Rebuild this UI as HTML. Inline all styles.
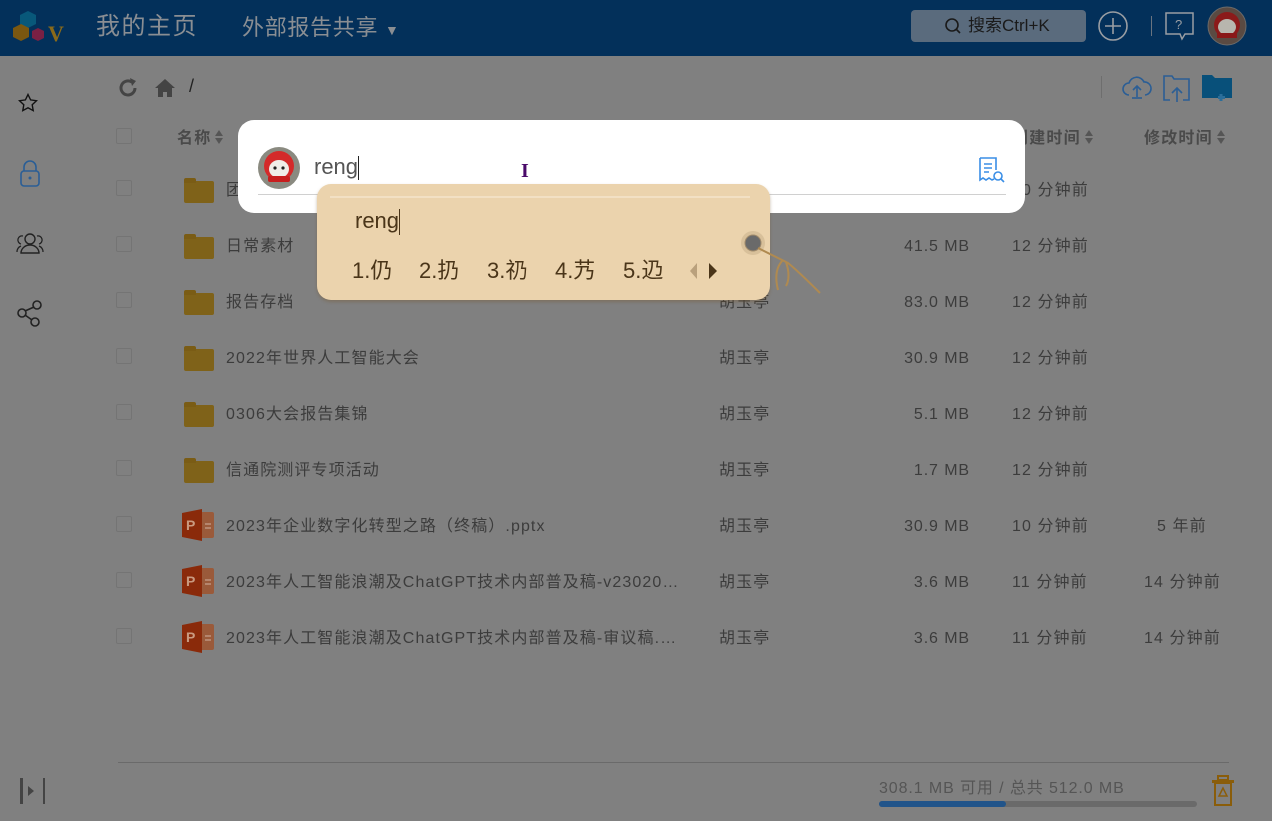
<!DOCTYPE html>
<html><head><meta charset="utf-8"><style>
*{margin:0;padding:0;box-sizing:border-box}
body{width:1272px;height:821px;overflow:hidden;background:#808080;font-family:"Liberation Sans","Noto Sans CJK SC",sans-serif;position:relative;color:#3c3c3c}
.hdr{position:absolute;left:0;top:0;width:1272px;height:56px;background:#03305a}
.t{position:absolute;white-space:nowrap}
.cb{position:absolute;left:116px;width:16px;height:16px;border:1px solid #747474;border-radius:2px}
.fold{position:absolute;left:184px;width:30px;height:22px;background:#7f6219;border-radius:2px}
.fold:before{content:"";position:absolute;left:0;top:-3px;width:12px;height:5px;background:#7a5c15;border-radius:2px 2px 0 0}
.row{font-size:16px;color:#3c3c3c;line-height:20px;letter-spacing:1.1px}
.sz{position:absolute;right:302px;font-size:16px;color:#3c3c3c;line-height:20px;white-space:nowrap;letter-spacing:0.9px}
.ppt{position:absolute;left:182px;width:34px;height:32px}
.so{display:inline-block;vertical-align:middle;margin-left:4px;width:9px;height:14px;position:relative;top:-2px}
.so:before{content:"";position:absolute;left:0;top:0;border-left:4.5px solid transparent;border-right:4.5px solid transparent;border-bottom:6px solid #555}
.so:after{content:"";position:absolute;left:0;bottom:0;border-left:4.5px solid transparent;border-right:4.5px solid transparent;border-top:6px solid #555}
.hd{font-size:16px;font-weight:bold;color:#4a4a4a;line-height:20px;letter-spacing:1.2px}
.cand{position:absolute;top:256px;font-size:22px;color:#4a3519;line-height:30px}
.long{overflow:hidden;text-overflow:ellipsis;width:458px}
</style></head><body>
<div class="hdr"></div>
<svg class="t" style="left:12px;top:10px" width="56" height="34"><polygon points="16,1 24,5 24,14 16,18 8,14 8,5" fill="#08587a"/><polygon points="9,14 17,18 17,27 9,31 1,27 1,18" fill="#7a5710"/><polygon points="26,18 32,21 32,28 26,31 20,28 20,21" fill="#7a2044"/><text x="36" y="31" font-family="Liberation Serif" font-weight="bold" font-size="22" fill="#8a6a1a">V</text></svg>
<div class="t" style="left:96px;top:12px;font-size:24px;color:#8a8e93;line-height:30px;letter-spacing:1.5px">我的主页</div>
<div class="t" style="left:242px;top:13px;font-size:22px;color:#8a8e93;line-height:30px;letter-spacing:0.7px">外部报告共享 <span style="font-size:14px">▼</span></div>
<div class="t" style="left:911px;top:10px;width:175px;height:32px;background:#5a6b7d;border-radius:4px;font-size:17px;color:#1a1a1a;padding:0 0 0 57px;line-height:32px">搜索Ctrl+K</div>
<svg class="t" style="left:944px;top:17px" width="18" height="18"><circle cx="8" cy="8" r="6" fill="none" stroke="#1a1a1a" stroke-width="1.6"/><line x1="12" y1="12" x2="16" y2="16" stroke="#1a1a1a" stroke-width="1.6"/></svg>
<svg class="t" style="left:1097px;top:10px" width="32" height="32"><circle cx="16" cy="16" r="14" fill="none" stroke="#9a9ea3" stroke-width="1.6"/><path d="M16 8v16M8 16h16" stroke="#9a9ea3" stroke-width="1.6"/></svg>
<div class="t" style="left:1151px;top:16px;width:1px;height:20px;background:#6a7480"></div>
<svg class="t" style="left:1164px;top:10px" width="32" height="32"><path d="M2 3h27v21h-8l-3 5-2-5H2z" fill="none" stroke="#9a9ea3" stroke-width="1.5"/><text x="11" y="19" font-size="13" fill="#9a9ea3">?</text></svg>
<svg class="t" style="left:1207px;top:6px" width="40" height="40"><circle cx="20" cy="20" r="19" fill="#5a4a42" stroke="#6a6a6a"/><circle cx="20" cy="19" r="13" fill="#8b1a1a"/><ellipse cx="20" cy="21" rx="9" ry="8" fill="#b8b6ae"/><rect x="10" y="27" width="20" height="5" fill="#8a1818"/></svg>
<!-- sidebar -->
<svg class="t" style="left:18px;top:93px" width="20" height="20"><path d="M10 1.5l2.6 5.4 5.9.8-4.3 4.1 1 5.8L10 14.8l-5.2 2.8 1-5.8L1.5 7.7l5.9-.8z" fill="none" stroke="#111" stroke-width="1.4"/></svg>
<svg class="t" style="left:19px;top:160px" width="22" height="28"><path d="M5 11V7a6 6 0 0 1 12 0v4" fill="none" stroke="#2a5e96" stroke-width="1.6"/><rect x="2" y="11" width="18" height="15" rx="3" fill="none" stroke="#2a5e96" stroke-width="1.6"/><circle cx="11" cy="18" r="1.5" fill="#2a5e96"/></svg>
<svg class="t" style="left:16px;top:232px" width="28" height="24"><circle cx="14" cy="7" r="5" fill="none" stroke="#222" stroke-width="1.4"/><path d="M5 21a9 8 0 0 1 18 0z" fill="none" stroke="#222" stroke-width="1.4"/><path d="M7 4a4 4 0 0 0 -2 8M21 4a4 4 0 0 1 2 8M1 20a6 6 0 0 1 4-6M27 20a6 6 0 0 0-4-6" fill="none" stroke="#222" stroke-width="1.3"/></svg>
<svg class="t" style="left:16px;top:300px" width="28" height="28"><circle cx="21" cy="5" r="4" fill="none" stroke="#222" stroke-width="1.6"/><circle cx="6" cy="13" r="4" fill="none" stroke="#222" stroke-width="1.6"/><circle cx="19" cy="22" r="4" fill="none" stroke="#222" stroke-width="1.6"/><path d="M9 11l9-4M9 15l7 5" stroke="#222" stroke-width="1.6"/></svg>
<!-- toolbar -->
<svg class="t" style="left:117px;top:77px" width="22" height="22"><path d="M18 11a7 7 0 1 1-3-5.8" fill="none" stroke="#444" stroke-width="3"/><path d="M13 1l6 3-4 5z" fill="#444"/></svg>
<svg class="t" style="left:154px;top:78px" width="22" height="20"><path d="M11 1L1 10h3v9h5v-5h4v5h5v-9h3z" fill="#444"/></svg>
<div class="t" style="left:189px;top:76px;font-size:18px;color:#222">/</div>
<div class="t" style="left:1101px;top:76px;width:1px;height:22px;background:#6e6e6e"></div>
<svg class="t" style="left:1121px;top:74px" width="32" height="26"><path d="M8 21a6 6 0 0 1 0-12 8 8 0 0 1 15-1 6.5 6.5 0 0 1 1 13" fill="none" stroke="#2b5e95" stroke-width="1.6"/><path d="M16 23V12M12 16l4-4 4 4" fill="none" stroke="#2b5e95" stroke-width="1.6"/><line x1="11" y1="24" x2="21" y2="24" stroke="#2b5e95" stroke-width="1.6"/></svg>
<svg class="t" style="left:1163px;top:74px" width="28" height="28"><path d="M7 26H1V2h8l2 3h15v21h-6" fill="none" stroke="#2b5e95" stroke-width="1.6"/><path d="M14 28V14M9 19l5-5 5 5" fill="none" stroke="#2b5e95" stroke-width="1.6"/></svg>
<svg class="t" style="left:1201px;top:74px" width="32" height="28"><path d="M1 1h10l3 3h17v20H1z" fill="#08507a"/><path d="M20 20v7M17 23.5h7" stroke="#2b6e9a" stroke-width="3"/></svg>
<!-- table header -->
<div class="cb" style="top:128px"></div>
<div class="t hd" style="left:177px;top:129px">名称<span class="so"></span></div>
<div class="t hd" style="left:1012px;top:129px">创建时间<span class="so"></span></div>
<div class="t hd" style="left:1144px;top:129px">修改时间<span class="so"></span></div>
<!-- rows -->
<div class="cb" style="top:180px"></div><div class="fold" style="top:181px"></div><div class="t row" style="left:226px;top:181px">团</div><div class="t row" style="left:1012px;top:181px">10 分钟前</div>
<div class="cb" style="top:236px"></div><div class="fold" style="top:237px"></div><div class="t row" style="left:226px;top:237px">日常素材</div><div class="sz" style="top:237px">41.5 MB</div><div class="t row" style="left:1012px;top:237px">12 分钟前</div>
<div class="cb" style="top:292px"></div><div class="fold" style="top:293px"></div><div class="t row" style="left:226px;top:293px">报告存档</div><div class="t row" style="left:719px;top:293px">胡玉亭</div><div class="sz" style="top:293px">83.0 MB</div><div class="t row" style="left:1012px;top:293px">12 分钟前</div>
<div class="cb" style="top:348px"></div><div class="fold" style="top:349px"></div><div class="t row" style="left:226px;top:349px">2022年世界人工智能大会</div><div class="t row" style="left:719px;top:349px">胡玉亭</div><div class="sz" style="top:349px">30.9 MB</div><div class="t row" style="left:1012px;top:349px">12 分钟前</div>
<div class="cb" style="top:404px"></div><div class="fold" style="top:405px"></div><div class="t row" style="left:226px;top:405px">0306大会报告集锦</div><div class="t row" style="left:719px;top:405px">胡玉亭</div><div class="sz" style="top:405px">5.1 MB</div><div class="t row" style="left:1012px;top:405px">12 分钟前</div>
<div class="cb" style="top:460px"></div><div class="fold" style="top:461px"></div><div class="t row" style="left:226px;top:461px">信通院测评专项活动</div><div class="t row" style="left:719px;top:461px">胡玉亭</div><div class="sz" style="top:461px">1.7 MB</div><div class="t row" style="left:1012px;top:461px">12 分钟前</div>
<div class="cb" style="top:516px"></div><svg class="ppt" style="top:509px" viewBox="0 0 34 32"><rect x="12" y="3" width="20" height="26" rx="2" fill="#9a5a3a"/><path d="M0 4l20-4v32L0 28z" fill="#8a2a0a"/><text x="4" y="21" font-size="14" font-weight="bold" fill="#c99a80">P</text><path d="M23 15h6M23 19h6" stroke="#d0b0a0"/></svg><div class="t row" style="left:226px;top:517px">2023年企业数字化转型之路（终稿）.pptx</div><div class="t row" style="left:719px;top:517px">胡玉亭</div><div class="sz" style="top:517px">30.9 MB</div><div class="t row" style="left:1012px;top:517px">10 分钟前</div><div class="t row" style="left:1157px;top:517px">5 年前</div>
<div class="cb" style="top:572px"></div><svg class="ppt" style="top:565px" viewBox="0 0 34 32"><rect x="12" y="3" width="20" height="26" rx="2" fill="#9a5a3a"/><path d="M0 4l20-4v32L0 28z" fill="#8a2a0a"/><text x="4" y="21" font-size="14" font-weight="bold" fill="#c99a80">P</text><path d="M23 15h6M23 19h6" stroke="#d0b0a0"/></svg><div class="t row long" style="left:226px;top:573px">2023年人工智能浪潮及ChatGPT技术内部普及稿-v230201.pptx</div><div class="t row" style="left:719px;top:573px">胡玉亭</div><div class="sz" style="top:573px">3.6 MB</div><div class="t row" style="left:1012px;top:573px">11 分钟前</div><div class="t row" style="left:1144px;top:573px">14 分钟前</div>
<div class="cb" style="top:628px"></div><svg class="ppt" style="top:621px" viewBox="0 0 34 32"><rect x="12" y="3" width="20" height="26" rx="2" fill="#9a5a3a"/><path d="M0 4l20-4v32L0 28z" fill="#8a2a0a"/><text x="4" y="21" font-size="14" font-weight="bold" fill="#c99a80">P</text><path d="M23 15h6M23 19h6" stroke="#d0b0a0"/></svg><div class="t row long" style="left:226px;top:629px">2023年人工智能浪潮及ChatGPT技术内部普及稿-审议稿.pptx</div><div class="t row" style="left:719px;top:629px">胡玉亭</div><div class="sz" style="top:629px">3.6 MB</div><div class="t row" style="left:1012px;top:629px">11 分钟前</div><div class="t row" style="left:1144px;top:629px">14 分钟前</div>
<!-- footer -->
<div class="t" style="left:118px;top:762px;width:1111px;height:1px;background:#6a6a6a"></div>
<div class="t" style="left:20px;top:778px;width:3px;height:26px;background:#444"></div>
<div class="t" style="left:43px;top:778px;width:2px;height:26px;background:#444"></div>
<div class="t" style="left:28px;top:786px;width:0;height:0;border-left:6px solid #444;border-top:5px solid transparent;border-bottom:5px solid transparent"></div>
<div class="t" style="left:879px;top:779px;font-size:16px;color:#555;line-height:20px;letter-spacing:0.9px">308.1 MB 可用 / 总共 512.0 MB</div>
<div class="t" style="left:879px;top:801px;width:318px;height:6px;background:#6a6a6a;border-radius:3px"></div>
<div class="t" style="left:879px;top:801px;width:127px;height:6px;background:#21548a;border-radius:3px"></div>
<svg class="t" style="left:1210px;top:775px" width="30" height="32"><rect x="8" y="1" width="10" height="4" fill="none" stroke="#8a5d0a" stroke-width="2"/><rect x="2" y="5" width="22" height="3" fill="#8a5d0a"/><rect x="5" y="8" width="16" height="22" fill="none" stroke="#8a5d0a" stroke-width="2"/><path d="M13 13l-4 8h8z" fill="none" stroke="#8a5d0a" stroke-width="1.5"/></svg>
<!-- modal -->
<div class="t" style="left:238px;top:120px;width:787px;height:93px;background:#fff;border-radius:16px"></div>
<svg class="t" style="left:258px;top:147px" width="42" height="42"><circle cx="21" cy="21" r="21" fill="#8a8a80"/><circle cx="21" cy="19" r="15" fill="#d42a2a"/><ellipse cx="21" cy="22" rx="10" ry="9" fill="#f0eee8"/><circle cx="17" cy="21" r="1.6" fill="#222"/><circle cx="25" cy="21" r="1.6" fill="#222"/><rect x="10" y="29" width="22" height="6" rx="2" fill="#c81e1e"/></svg>
<div class="t" style="left:314px;top:153px;font-size:22px;color:#555;line-height:28px">reng<span style="display:inline-block;width:1px;height:24px;background:#222;vertical-align:middle"></span></div>
<div class="t" style="left:521px;top:160px;font-size:20px;font-weight:bold;color:#4a0a6a;font-family:'Liberation Serif',serif">I</div>
<div class="t" style="left:258px;top:194px;width:748px;height:1px;background:#d0d0d0"></div>
<svg class="t" style="left:977px;top:156px" width="28" height="28"><path d="M3 2h16v12M3 2v22l3-2 3 2 3-2 3 2 2-1" fill="none" stroke="#3a8ee6" stroke-width="1.6"/><path d="M7 8h8M7 12h8M7 16h5" stroke="#3a8ee6" stroke-width="1.6"/><circle cx="21" cy="20" r="4" fill="none" stroke="#3a8ee6" stroke-width="1.6"/><path d="M24 23l3 3" stroke="#3a8ee6" stroke-width="1.6"/></svg>
<!-- IME -->
<div class="t" style="left:317px;top:184px;width:453px;height:116px;background:#ebd3ad;border-radius:14px;box-shadow:0 2px 3px rgba(120,90,50,.4)"></div>
<div class="t" style="left:330px;top:196px;width:420px;height:2px;background:#f2e0c4"></div>
<div class="t" style="left:355px;top:206px;font-size:22px;color:#4a3519;line-height:30px">reng<span style="display:inline-block;width:1px;height:26px;background:#4a3519;vertical-align:middle"></span></div>
<div class="cand" style="left:352px">1.仍</div>
<div class="cand" style="left:419px">2.扔</div>
<div class="cand" style="left:487px">3.礽</div>
<div class="cand" style="left:555px">4.艿</div>
<div class="cand" style="left:623px">5.辸</div>
<div class="t" style="left:690px;top:263px;width:0;height:0;border-right:7px solid #b9a07c;border-top:8px solid transparent;border-bottom:8px solid transparent"></div>
<div class="t" style="left:709px;top:263px;width:0;height:0;border-left:8px solid #4a3519;border-top:8px solid transparent;border-bottom:8px solid transparent"></div>
<svg class="t" style="left:738px;top:228px" width="86" height="70"><circle cx="15" cy="15" r="12" fill="#d8c09a"/><circle cx="15" cy="15" r="8" fill="#6a6a6a" stroke="#a08a6a"/><path d="M20 20q20 10 30 15q10 8 32 30M45 32q-10 10-5 30M48 34q5 15 0 24" fill="none" stroke="#b08a50" stroke-width="2"/></svg>
</body></html>
